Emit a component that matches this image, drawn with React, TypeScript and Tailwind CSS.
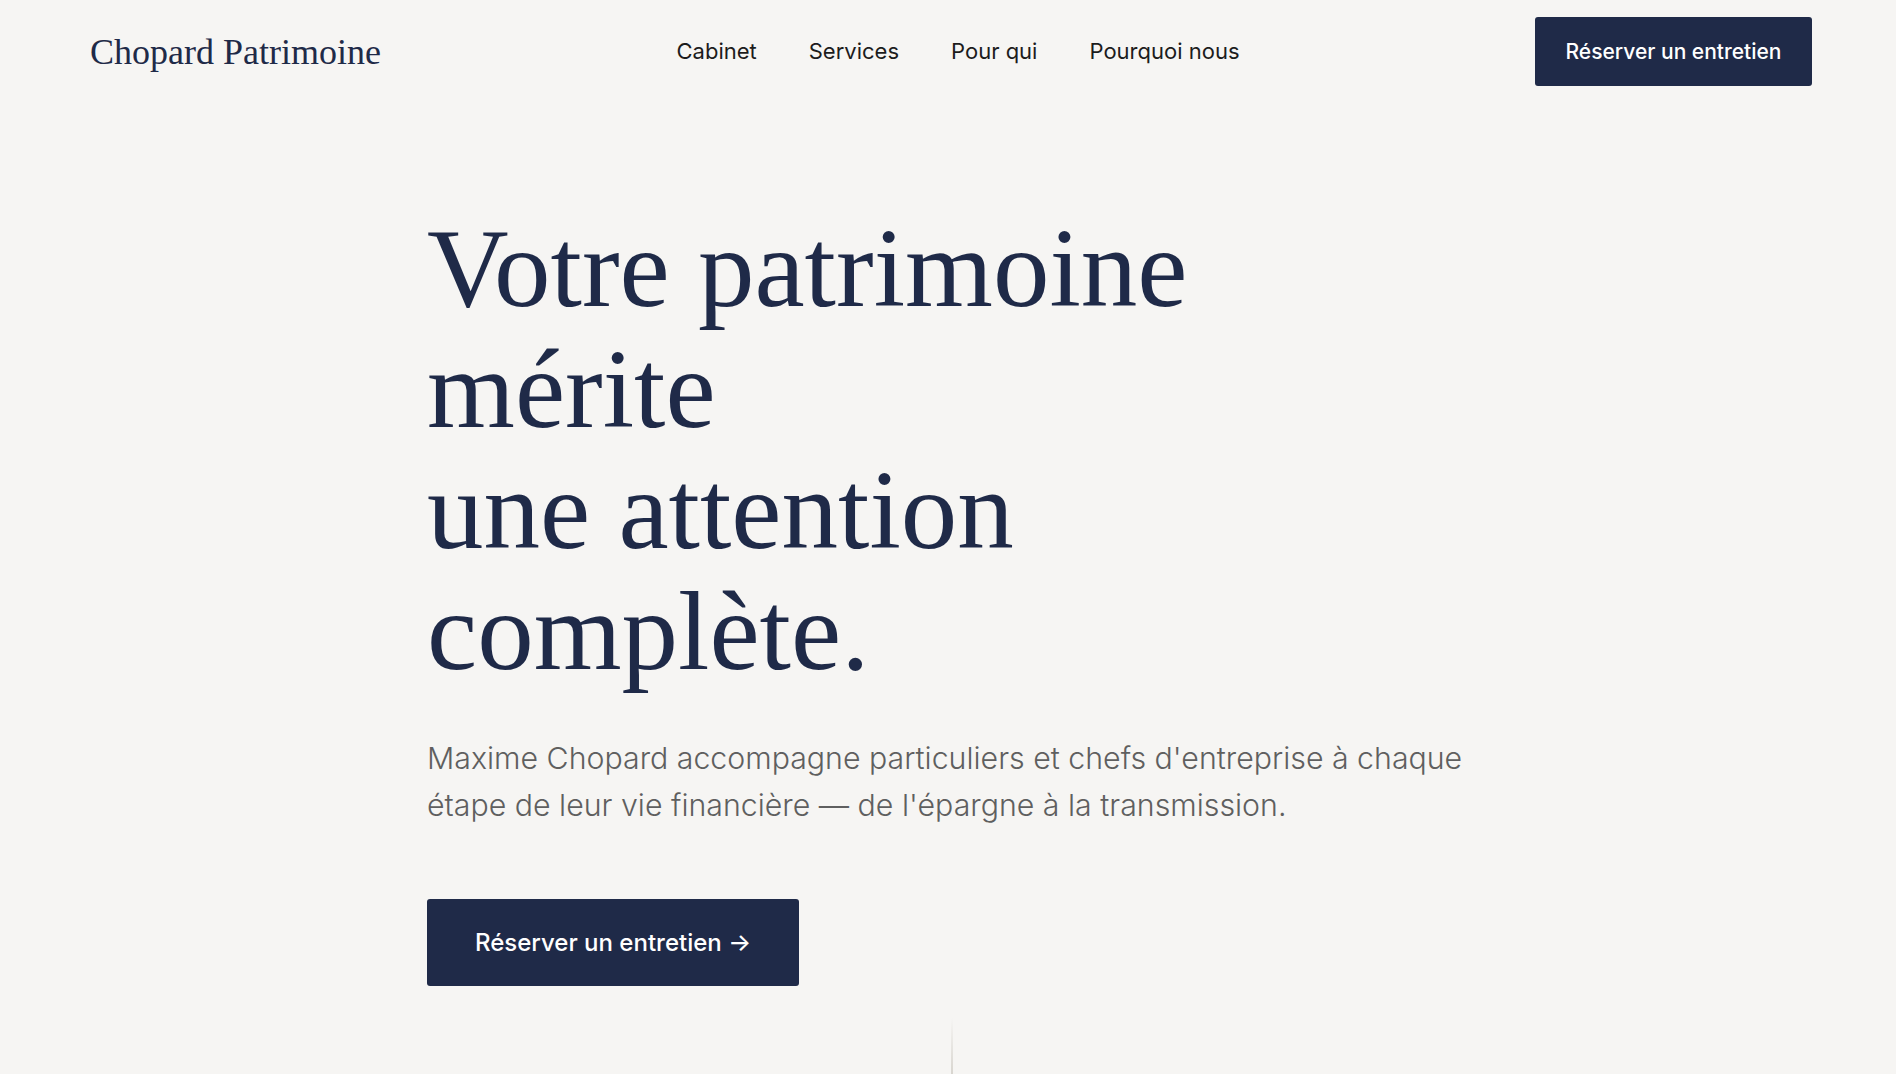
export default function App() {
  const nav = ["Cabinet", "Services", "Pour qui", "Pourquoi nous"];

  return (
    <div className="relative min-h-screen overflow-hidden bg-[#f6f5f3] font-['Inter',sans-serif]">
      {/* Header */}
      <header className="flex h-[103px] items-center justify-between px-[84px]">
        <a className="w-[310px] pl-[6px] font-['Liberation_Serif',serif] text-[36px] leading-none text-[#1f2a48]">
          Chopard Patrimoine
        </a>
        <nav className="flex items-center gap-[52px] text-[22px] text-[#1c1c1c]">
          {nav.map((n) => (
            <a key={n}>{n}</a>
          ))}
        </nav>
        <div className="flex w-[290px] justify-end">
          <button className="h-[69px] w-[277px] rounded-[3px] bg-[#1f2a48] text-[21px] font-medium text-white">
            Réserver un entretien
          </button>
        </div>
      </header>

      {/* Hero */}
      <main className="mx-auto w-[1042px] pt-[104px]">
        <h1 className="font-['Liberation_Serif',serif] text-[113px] leading-[121px] text-[#1f2a48]">
          <span className="block">Votre patrimoine</span>
          <span className="block">mérite</span>
          <span className="block">une attention</span>
          <span className="block">complète.</span>
        </h1>
        <p className="mt-[44px] text-[30.3px] font-light leading-[47px] text-[#5f5f5f]">
          Maxime Chopard accompagne particuliers et chefs d'entreprise à chaque étape de leur vie
          financière — de l'épargne à la transmission.
        </p>
        <button className="mt-[70px] h-[87px] w-[372px] rounded-[3px] bg-[#1f2a48] text-[24px] font-medium text-white">
          Réserver un entretien →
        </button>
      </main>

      {/* Scroll indicator */}
      <div className="absolute bottom-0 left-[951px] h-[56px] w-[2px] bg-gradient-to-b from-transparent to-[#d8d5cf]" />
    </div>
  );
}
